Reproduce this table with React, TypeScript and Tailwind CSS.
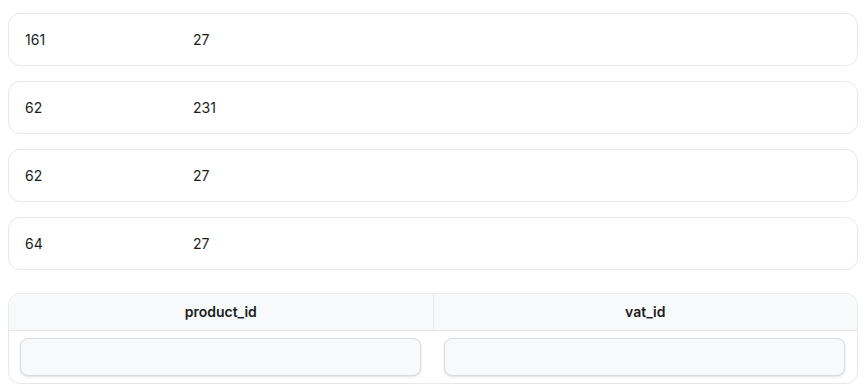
const rows = [
  { productId: 161, vatId: 27 },
  { productId: 62, vatId: 231 },
  { productId: 62, vatId: 27 },
  { productId: 64, vatId: 27 },
];

export default function App() {
  return (
    <div
      className="min-h-screen bg-white pt-[13px] pl-2 pr-[10px] text-[#1a1d21]"
      style={{ fontFamily: 'Inter, "Noto Sans", sans-serif' }}
    >
      <div className="flex flex-col gap-[15px]">
        {rows.map((row, i) => (
          <div
            key={i}
            className="flex h-[53px] items-center rounded-xl border border-[#e8e9ec] bg-white px-4 text-sm"
          >
            <span className="w-[168px]">{row.productId}</span>
            <span>{row.vatId}</span>
          </div>
        ))}
      </div>

      <div className="mt-[23px] overflow-hidden rounded-xl border border-[#e8e9ec]">
        <table className="w-full table-fixed border-collapse">
          <thead className="bg-[#f8f9fb]">
            <tr className="border-b border-[#e5e7eb]">
              <th className="h-[36px] border-r border-[#e5e7eb] text-center text-sm font-semibold">
                product_id
              </th>
              <th className="h-[36px] text-center text-sm font-semibold">vat_id</th>
            </tr>
          </thead>
          <tbody>
            <tr>
              <td className="pl-[11px] pr-3 pt-[7px] pb-[7px]">
                <input className="block h-[38px] w-full rounded-lg border border-[#d9dbdf] bg-[#f8f9fb] shadow-sm outline-none" />
              </td>
              <td className="pl-[11px] pr-3 pt-[7px] pb-[7px]">
                <input className="block h-[38px] w-full rounded-lg border border-[#d9dbdf] bg-[#f8f9fb] shadow-sm outline-none" />
              </td>
            </tr>
          </tbody>
        </table>
      </div>
    </div>
  );
}
